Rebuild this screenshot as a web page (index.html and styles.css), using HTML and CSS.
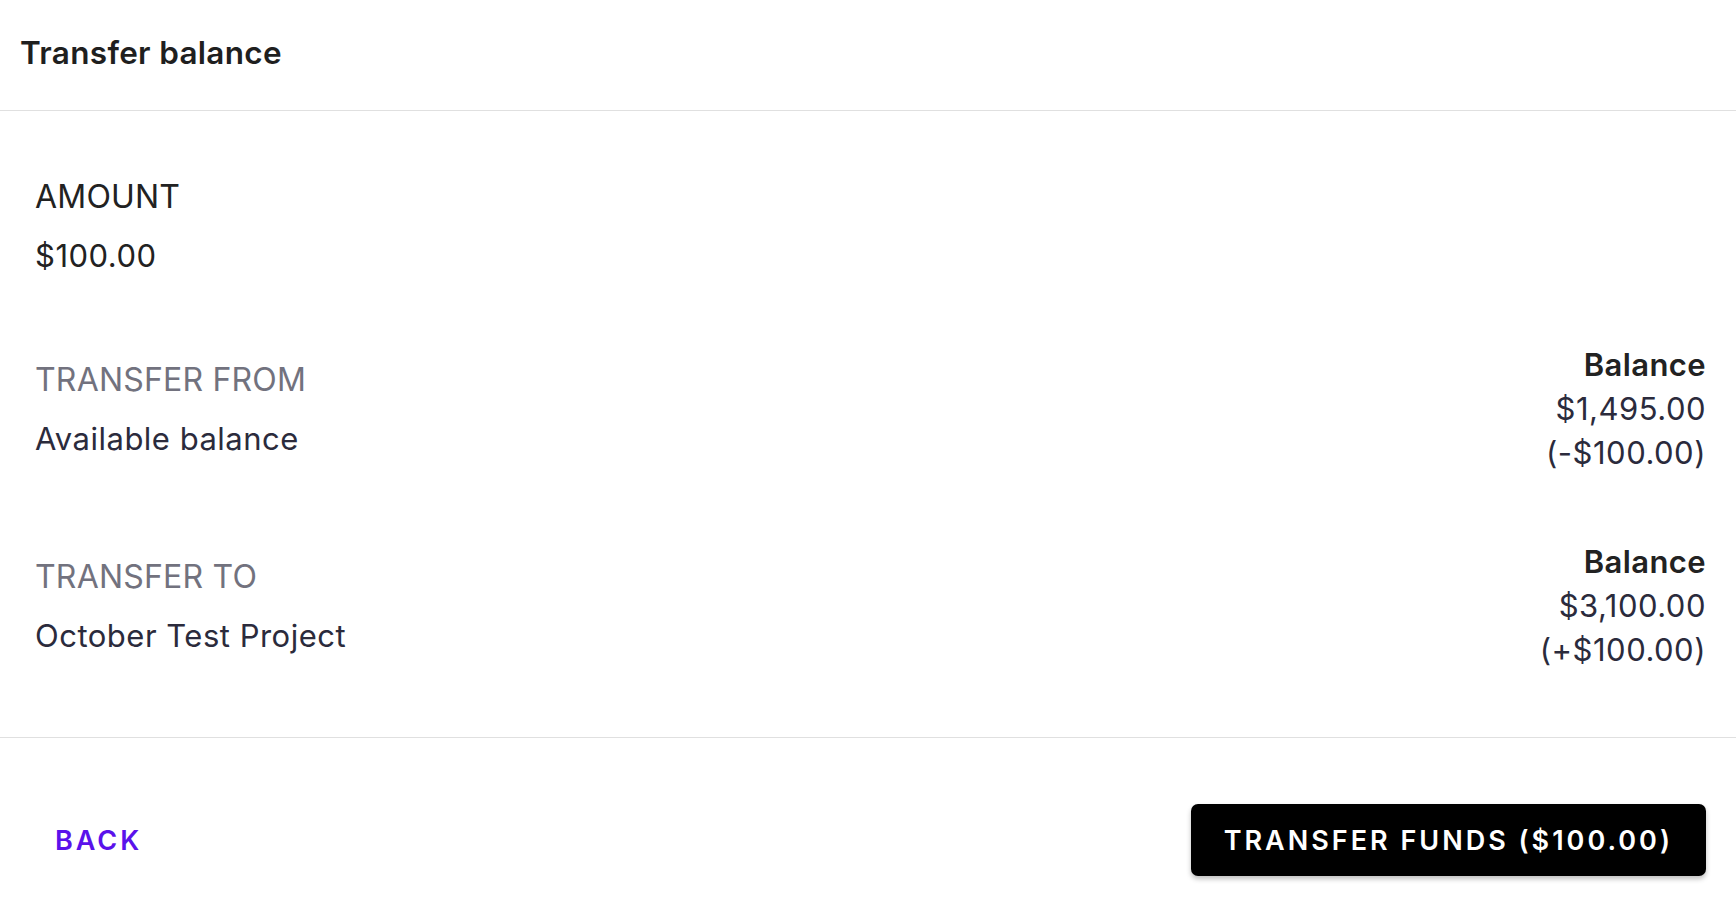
FILE: index.html
```html
<!DOCTYPE html>
<html lang="en">
<head>
  <meta charset="UTF-8">
  <title>Transfer balance</title>
  <meta name="viewport" content="width=device-width, initial-scale=1">
  <link rel="stylesheet" href="styles.css">
</head>
<body>
  <div class="dialog">
    <header class="dialog-header">
      <h2>Transfer balance</h2>
    </header>

    <div class="dialog-content">
      <div class="field">
        <div class="field-label dark">AMOUNT</div>
        <div class="field-value plain">$100.00</div>
      </div>

      <div class="row">
        <div class="field">
          <div class="field-label">TRANSFER FROM</div>
          <div class="field-value">Available balance</div>
        </div>
        <div class="balance">
          <div class="balance-title">Balance</div>
          <div>$1,495.00</div>
          <div>(-$100.00)</div>
        </div>
      </div>

      <div class="row">
        <div class="field">
          <div class="field-label">TRANSFER TO</div>
          <div class="field-value">October Test Project</div>
        </div>
        <div class="balance">
          <div class="balance-title">Balance</div>
          <div>$3,100.00</div>
          <div>(+$100.00)</div>
        </div>
      </div>
    </div>

    <footer class="dialog-actions">
      <button class="btn-text">BACK</button>
      <button class="btn-primary">TRANSFER FUNDS ($100.00)</button>
    </footer>
  </div>
</body>
</html>
```

FILE: styles.css
```css
body {
  margin: 0;
  font-family: Inter, "Noto Sans", sans-serif;
  background: #fff;
  color: #222;
}

.dialog-header {
  height: 111px;
  border-bottom: 1px solid #e0e0e0;
  padding: 31px 20px 0;
  box-sizing: border-box;
}

.dialog-header h2 {
  margin: 0;
  font-size: 31.5px;
  font-weight: 600;
  line-height: 44px;
  color: #1f1f1f;
  letter-spacing: 0.3px;
}

.dialog-content {
  padding: 64px 30px 65px 35px;
  display: flex;
  flex-direction: column;
  gap: 65px;
  border-bottom: 1px solid #e0e0e0;
}

.field {
  display: flex;
  flex-direction: column;
  gap: 15px;
}

.field-label {
  font-size: 32px;
  line-height: 44px;
  color: #72727e;
  letter-spacing: 0.2px;
}

.field-label.dark {
  color: #222;
}

.field-value {
  font-size: 31px;
  line-height: 44px;
  color: #2b2b3c;
  letter-spacing: 0.5px;
}

.field-value.plain {
  color: #222;
}

.row {
  display: flex;
  justify-content: space-between;
  align-items: center;
}

.balance {
  text-align: right;
  font-size: 31px;
  line-height: 44px;
  color: #2b2b3c;
  letter-spacing: 0.5px;
}

.balance-title {
  font-weight: 600;
  color: #222;
  letter-spacing: 0.4px;
}

.dialog-actions {
  display: flex;
  justify-content: space-between;
  align-items: center;
  padding: 66px 30px 30px 35px;
}

button {
  font-family: Inter, "Noto Sans", sans-serif;
  font-size: 27px;
  font-weight: 600;
  letter-spacing: 3px;
  border: none;
  cursor: pointer;
}

.btn-text {
  background: none;
  color: #5a12eb;
  padding: 0 20px;
  height: 72px;
}

.btn-primary {
  background: #000;
  color: #fff;
  height: 72px;
  padding: 0 33px;
  border-radius: 7px;
  box-shadow: 0 3px 5px rgba(0, 0, 0, 0.25);
}
```
